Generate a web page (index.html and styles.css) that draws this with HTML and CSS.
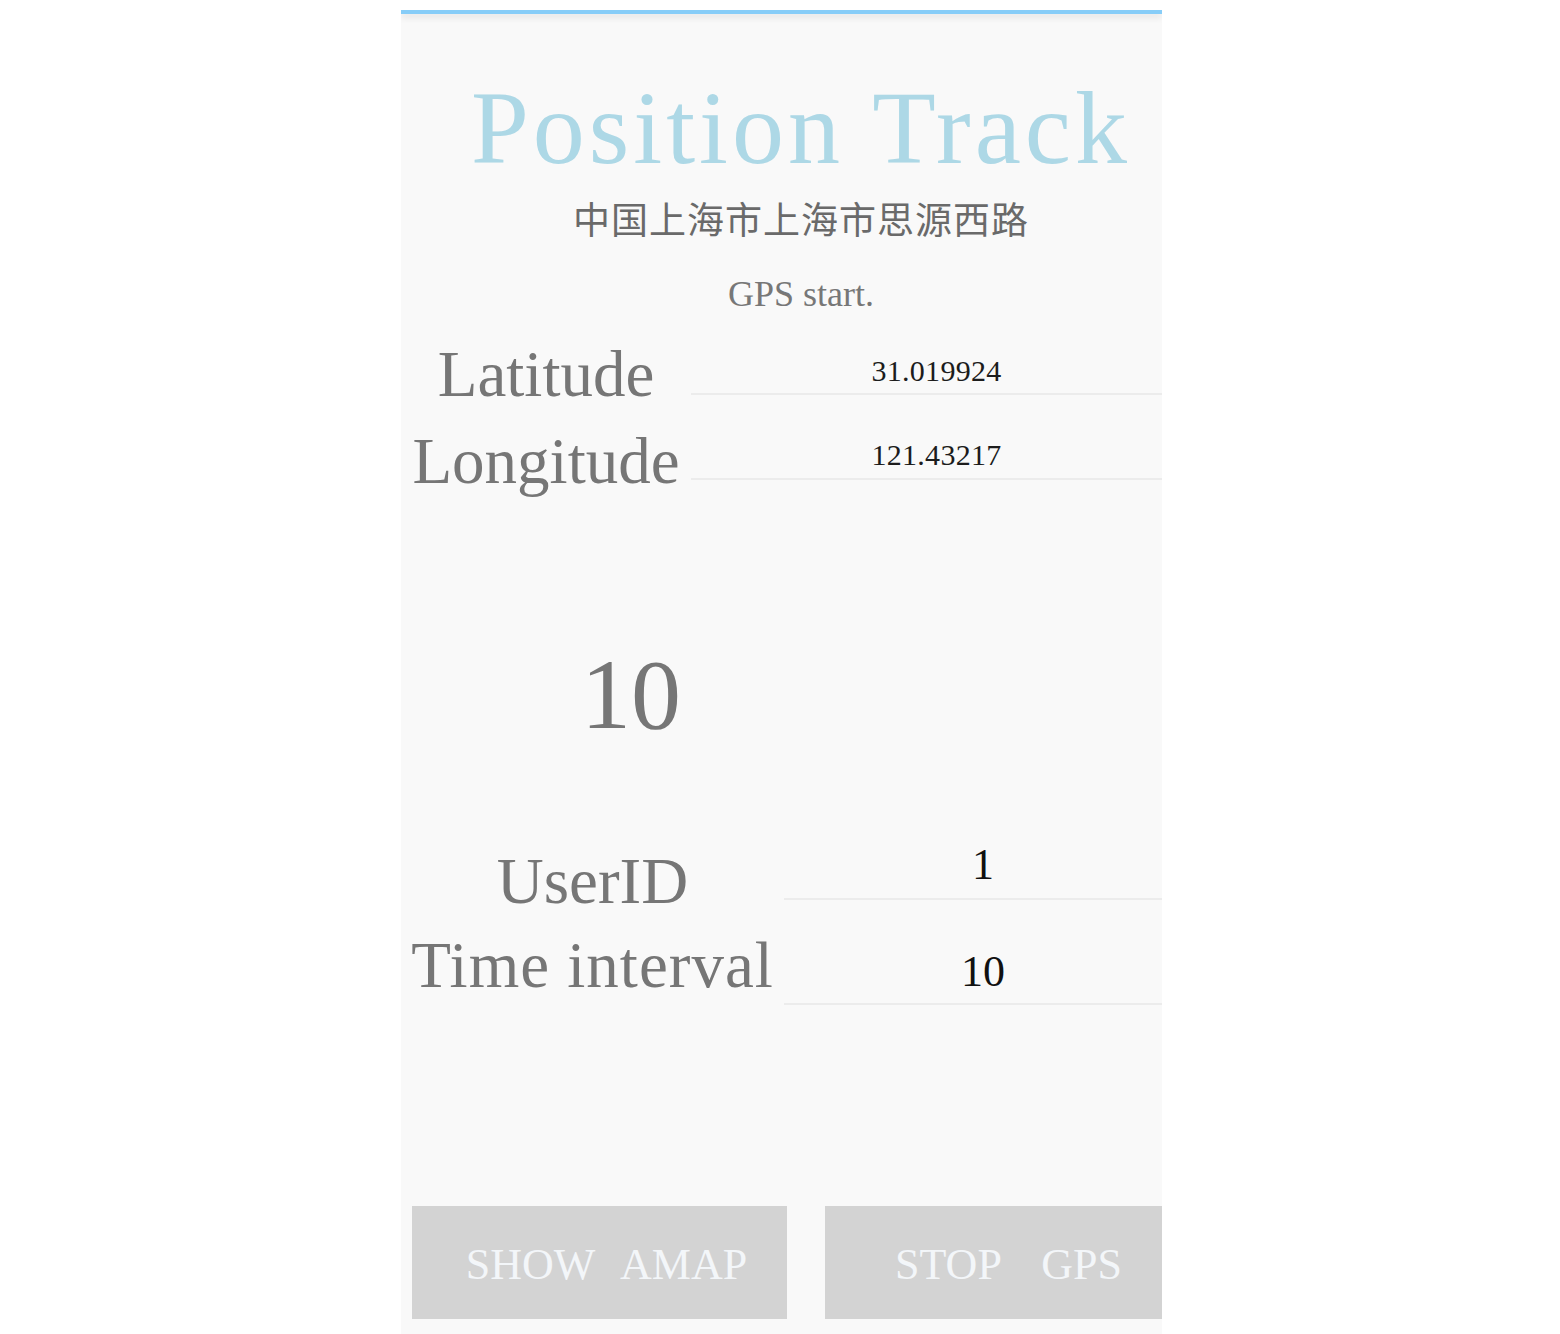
FILE: index.html
```html
<!DOCTYPE html>
<html>
<head>
<meta charset="utf-8">
<link rel="stylesheet" href="styles.css">
</head>
<body>
<div class="page">
  <div class="screen">
    <div class="topbar"></div>
    <div class="header">
      <div class="title">Position Track</div>
      <div class="address">中国上海市上海市思源西路</div>
      <div class="status">GPS start.</div>
    </div>
    <div class="row row-lat">
      <div class="label">Latitude</div>
      <div class="field"><span class="value small">31.019924</span></div>
    </div>
    <div class="row row-lng">
      <div class="label">Longitude</div>
      <div class="field"><span class="value small">121.43217</span></div>
    </div>
    <div class="counter">10</div>
    <div class="row wide row-user">
      <div class="label">UserID</div>
      <div class="field"><span class="value big">1</span></div>
    </div>
    <div class="row wide row-interval">
      <div class="label">Time interval</div>
      <div class="field"><span class="value big">10</span></div>
    </div>
    <div class="buttons">
      <div class="btn btn-left">SHOW AMAP</div>
      <div class="btn btn-right">STOP GPS</div>
    </div>
  </div>
</div>
</body>
</html>
```
FILE: styles.css
```css
html, body {
  margin: 0;
  padding: 0;
  background: #ffffff;
}
.page {
  padding-top: 10px;
  padding-left: 401px;
}
.screen {
  width: 761px;
  height: 1324px;
  background: #f9f9f9;
  overflow: hidden;
  display: flex;
  flex-direction: column;
  font-family: "Liberation Serif", "Noto Sans CJK SC", serif;
}
.topbar {
  height: 4px;
  flex: none;
  background: #87cdf8;
  box-shadow: 0 3px 7px rgba(0, 0, 0, 0.12);
}
.header {
  padding-left: 39px;
  text-align: center;
}
.title {
  margin-top: 59px;
  height: 110px;
  font-size: 104px;
  line-height: 110px;
  letter-spacing: 4px;
  color: #add8e6;
}
.address {
  margin-top: 10px;
  height: 50px;
  font-family: "Noto Sans CJK SC", sans-serif;
  font-size: 37px;
  line-height: 50px;
  letter-spacing: 1px;
  color: #6a6a6a;
}
.status {
  margin-top: 26px;
  height: 50px;
  font-size: 36px;
  line-height: 50px;
  color: #777777;
}
.row {
  display: grid;
  grid-template-columns: 290px 1fr;
  flex: none;
}
.row.wide {
  grid-template-columns: 383px 1fr;
}
.row-lat {
  margin-top: -9px;
  height: 85px;
}
.row-lng {
  height: 85px;
}
.label {
  align-self: end;
  text-align: center;
  font-size: 65px;
  line-height: 65px;
  color: #767676;
  white-space: nowrap;
}
.row-lat .label { margin-bottom: -12px; }
.row-lng .label { margin-bottom: -14px; }
.row-interval .label { letter-spacing: 1px; }
.field {
  display: flex;
  align-items: flex-end;
  justify-content: center;
  padding-left: 20px;
  border-bottom: 2px solid #ececec;
}
.value {
  color: #1c1c1c;
}
.value.small {
  font-size: 30px;
  line-height: 30px;
  letter-spacing: 0.3px;
  padding-bottom: 7px;
}
.row-lng .value.small { padding-bottom: 8px; }
.value.big {
  font-size: 44px;
  line-height: 44px;
  color: #111111;
}
.counter {
  margin-top: 165px;
  width: 460px;
  height: 100px;
  text-align: center;
  font-size: 100px;
  line-height: 100px;
  color: #767676;
}
.row-user {
  margin-top: 55px;
  height: 100px;
}
.row-user .label { margin-bottom: -14px; }
.row-user .value { padding-bottom: 11px; }
.row-interval {
  height: 105px;
}
.row-interval .label { margin-bottom: 7px; }
.row-interval .value { padding-bottom: 9px; }
.buttons {
  margin-top: 201px;
  display: flex;
  gap: 38px;
  padding-left: 11px;
}
.btn {
  flex: none;
  width: 375px;
  height: 113px;
  box-sizing: border-box;
  padding-top: 4px;
  display: flex;
  align-items: center;
  justify-content: center;
  background: #d3d3d3;
  color: #f3f6f9;
  font-size: 44px;
  line-height: 44px;
  white-space: nowrap;
}
.btn-left {
  word-spacing: 17px;
  padding-left: 14px;
}
.btn-right {
  word-spacing: 30px;
  padding-right: 8px;
}
```
